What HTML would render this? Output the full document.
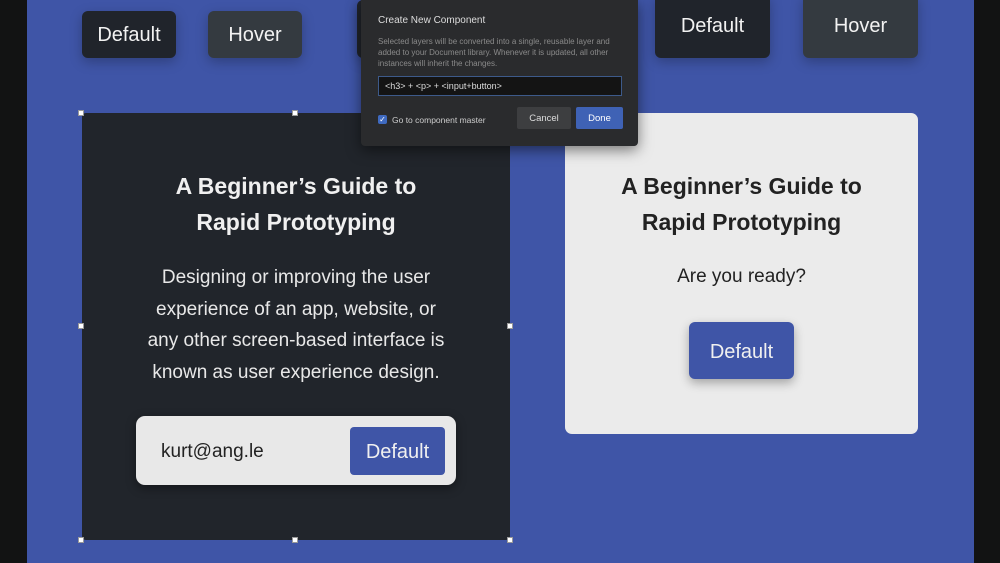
<!DOCTYPE html>
<html><head><style>
*{margin:0;padding:0;box-sizing:border-box}
body{width:1000px;height:563px;overflow:hidden;background:#3f55a7;font-family:"Liberation Sans",sans-serif;position:relative}
.abs{position:absolute}
.btn{position:absolute;color:#f2f2f2;font-size:20px;display:flex;align-items:center;justify-content:center;border-radius:6px;box-shadow:0 4px 12px rgba(0,0,0,.25)}
.d{background:#20242b}.h{background:#343a40}
.hd{position:absolute;width:6px;height:6px;background:#fff;border:1px solid #999}
h3{font-size:23px;font-weight:bold;text-align:center;line-height:36px}
</style></head><body>
<div class="abs" style="left:0;top:0;width:27px;height:563px;background:#121313"></div>
<div class="abs" style="left:974px;top:0;width:26px;height:563px;background:#121313"></div>
<div class="btn d" style="left:82px;top:11px;width:94px;height:47px;padding-top:2px">Default</div>
<div class="btn h" style="left:208px;top:11px;width:94px;height:47px;padding-top:2px">Hover</div>
<div class="btn d" style="left:357px;top:0;width:20px;height:58px"></div>
<div class="btn d" style="left:655px;top:-6px;width:115px;height:64px">Default</div>
<div class="btn h" style="left:803px;top:-6px;width:115px;height:64px">Hover</div>

<div class="abs" style="left:82px;top:113px;width:428px;height:427px;background:#21252b;color:#f0f0f0;border-radius:4px">
<h3 style="margin-top:55px">A Beginner’s Guide to<br>Rapid Prototyping</h3>
<p style="font-size:19px;line-height:31.5px;text-align:center;margin-top:22px;color:#e8e8e8">Designing or improving the user<br>experience of an app, website, or<br>any other screen-based interface is<br>known as user experience design.</p>
<div class="abs" style="left:54px;top:303px;width:320px;height:69px;background:#e8e8e8;border-radius:9px;box-shadow:0 3px 10px rgba(0,0,0,.4)">
<div class="abs" style="left:25px;top:25px;font-size:19px;color:#222">kurt@ang.le</div>
<div class="abs" style="left:214px;top:11px;width:95px;height:48px;background:#3f55a7;border-radius:4px;color:#f0f0f0;font-size:20px;display:flex;align-items:center;justify-content:center;padding-top:2px">Default</div>
</div>
</div>
<div class="hd" style="left:78px;top:110px"></div><div class="hd" style="left:292px;top:110px"></div><div class="hd" style="left:507px;top:110px"></div>
<div class="hd" style="left:78px;top:323px"></div><div class="hd" style="left:507px;top:323px"></div>
<div class="hd" style="left:78px;top:537px"></div><div class="hd" style="left:292px;top:537px"></div><div class="hd" style="left:507px;top:537px"></div>

<div class="abs" style="left:565px;top:113px;width:353px;height:321px;background:#ebebeb;border-radius:7px;color:#222">
<h3 style="margin-top:55px">A Beginner’s Guide to<br>Rapid Prototyping</h3>
<p style="font-size:19px;text-align:center;margin-top:26px">Are you ready?</p>
<div class="abs" style="left:124px;top:209px;width:105px;height:57px;background:#3f55a7;border-radius:6px;color:#f0f0f0;font-size:20px;display:flex;align-items:center;justify-content:center;padding-top:3px;box-shadow:0 4px 10px rgba(0,0,0,.3)">Default</div>
</div>

<div class="abs" style="left:361px;top:0;width:277px;height:146px;background:#2a2b2d;border-radius:0 0 4px 4px;box-shadow:0 4px 14px rgba(0,0,0,.5)">
<div class="abs" style="left:17px;top:15px;font-size:10px;color:#ddd">Create New Component</div>
<div class="abs" style="left:17px;top:36px;font-size:8px;line-height:11px;color:#8a8a8a;width:255px">Selected layers will be converted into a single, reusable layer and added to your Document library. Whenever it is updated, all other instances will inherit the changes.</div>
<div class="abs" style="left:17px;top:76px;width:244px;height:20px;background:#141414;border:1px solid #3d5a8a;font-size:9px;color:#ddd;padding:4px 6px">&lt;h3&gt; + &lt;p&gt; + &lt;input+button&gt;</div>
<div class="abs" style="left:17px;top:115px;width:9px;height:9px;background:#3f6ac0;border-radius:2px;color:#fff;font-size:8px;line-height:9px;text-align:center">✓</div>
<div class="abs" style="left:31px;top:115px;font-size:8.5px;color:#ccc">Go to component master</div>
<div class="abs" style="left:156px;top:107px;width:54px;height:22px;background:#3d3e40;border-radius:2px;color:#ddd;font-size:9.5px;display:flex;align-items:center;justify-content:center">Cancel</div>
<div class="abs" style="left:215px;top:107px;width:47px;height:22px;background:#3f62b5;border-radius:2px;color:#fff;font-size:9.5px;display:flex;align-items:center;justify-content:center">Done</div>
</div>
</body></html>
